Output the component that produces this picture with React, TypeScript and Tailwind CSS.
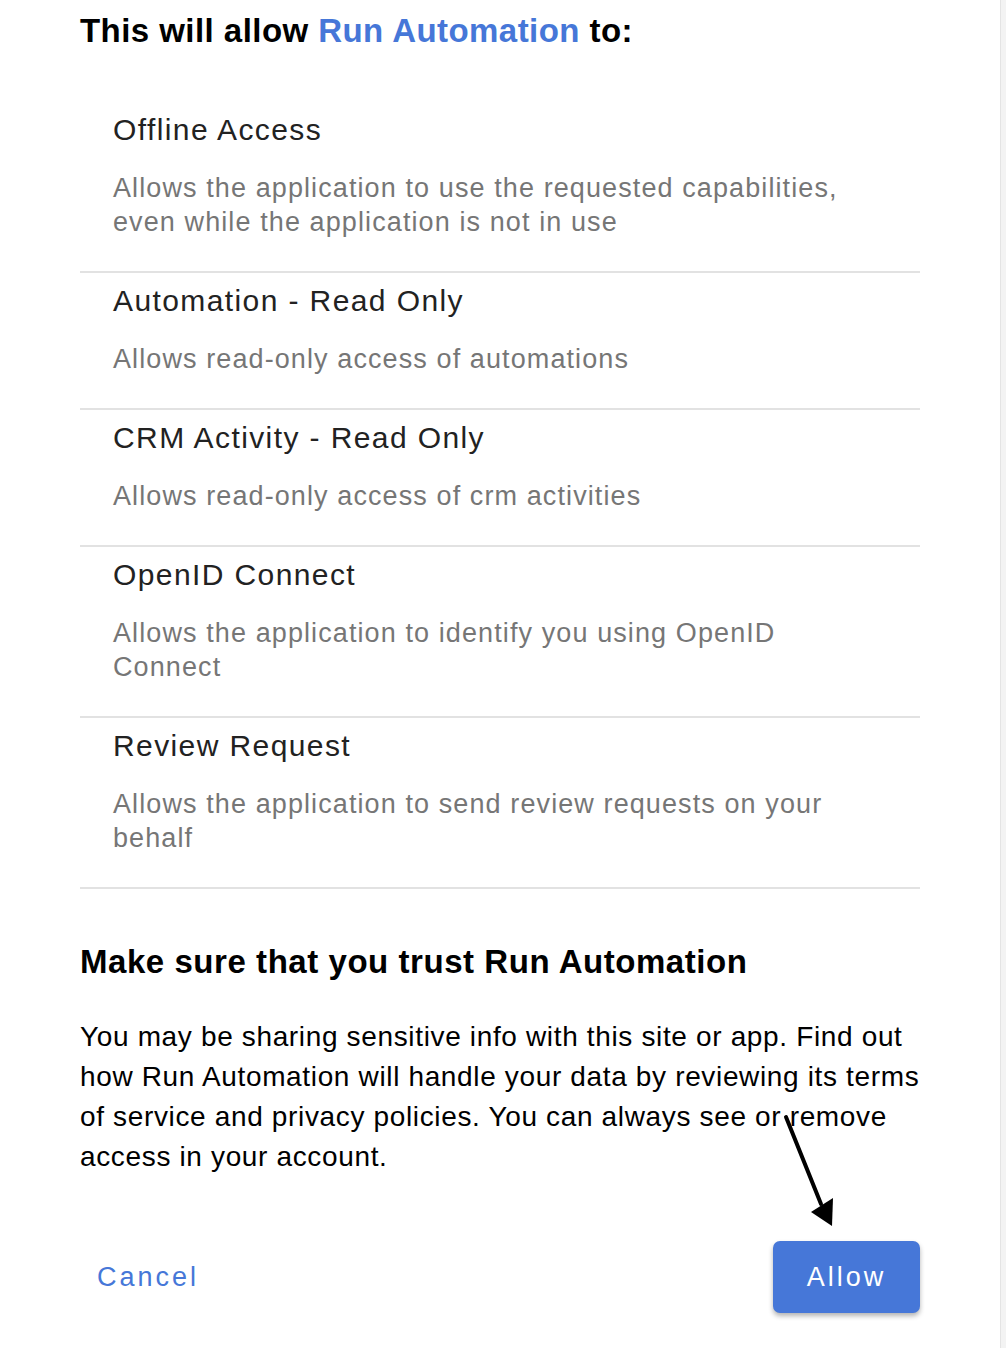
import React from "react";

interface Scope {
  title: string;
  description: string;
}

const scopes: Scope[] = [
  {
    title: "Offline Access",
    description: "Allows the application to use the requested capabilities, even while the application is not in use",
  },
  { title: "Automation - Read Only", description: "Allows read-only access of automations" },
  { title: "CRM Activity - Read Only", description: "Allows read-only access of crm activities" },
  { title: "OpenID Connect", description: "Allows the application to identify you using OpenID Connect" },
  { title: "Review Request", description: "Allows the application to send review requests on your behalf" },
];

const font = { fontFamily: '"Liberation Sans", Arial, sans-serif' };

export default function App() {
  return (
    <div className="flex min-h-[1348px] w-[1006px] bg-white text-black" style={font}>
      <div className="relative flex-1">
        <div className="ml-[80px] w-[840px] pt-[13px]">
          {/* Header */}
          <h1 className="text-[33px] font-bold leading-[36px] tracking-[0.45px] text-black">
            This will allow <span className="text-[#4677d8]">Run Automation</span> to:
          </h1>

          {/* Scopes */}
          <div className="mt-[51px] border-b-2 border-[#e2e2e2]">
            {scopes.map((s, i) => (
              <div
                key={s.title}
                className={`px-[33px] pt-[8px] pb-[32px] ${i > 0 ? "border-t-2 border-[#e2e2e2]" : "border-t-2 border-transparent"}`}
              >
                <p className="text-[30px] leading-[40px] tracking-[1.4px] text-[#222222]">{s.title}</p>
                <p className="mt-[21px] max-w-[745px] text-[27px] leading-[34px] tracking-[1.1px] text-[#767676]">
                  {s.description}
                </p>
              </div>
            ))}
          </div>

          {/* Trust notice */}
          <h2 className="mt-[55px] text-[33px] font-bold leading-[36px] tracking-[0.55px] text-black">
            Make sure that you trust Run Automation
          </h2>
          <p className="mt-[37px] w-[860px] text-[28px] leading-[40px] tracking-[0.65px] text-black">
            You may be sharing sensitive info with this site or app. Find out how Run Automation will handle your data
            by reviewing its terms of service and privacy policies. You can always see or remove access in your
            account.
          </p>

          {/* Actions */}
          <div className="mt-[64px] flex items-center justify-between">
            <button className="ml-[17px] text-[27px] font-medium tracking-[3px] text-[#4677d8]">Cancel</button>
            <button className="flex h-[72px] w-[147px] items-center justify-center rounded-[7px] bg-[#4677d8] text-[27px] font-medium tracking-[3px] text-white shadow-[0_3px_5px_rgba(0,0,0,0.3)]">
              Allow
            </button>
          </div>
        </div>

        {/* Annotation arrow */}
        <svg className="absolute left-[780px] top-[1112px]" width="60" height="120" viewBox="0 0 60 120">
          <line x1="6" y1="5" x2="41" y2="92" stroke="black" strokeWidth="4" strokeLinecap="round" />
          <polygon points="52,114 31,100 53,86" fill="black" />
        </svg>
      </div>
      <div className="w-[6px] shrink-0 border-l border-[#e4e4e4] bg-[#f3f3f3]" />
    </div>
  );
}
